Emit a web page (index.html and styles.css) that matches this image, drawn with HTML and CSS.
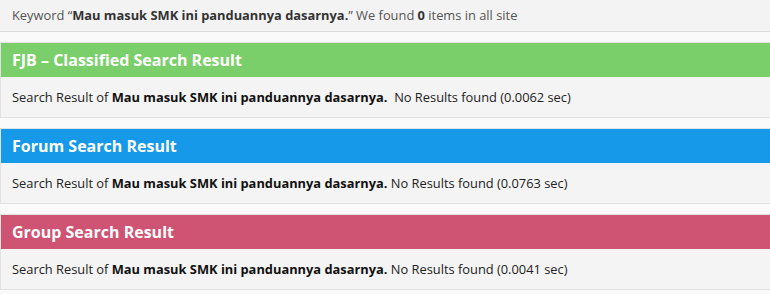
FILE: index.html
```html
<!DOCTYPE html>
<html>
<head>
<meta charset="utf-8">
<link rel="stylesheet" href="styles.css">
</head>
<body>
<div class="topbar">Keyword “<b>Mau masuk SMK ini panduannya dasarnya.</b>” We found <b>0</b> items in all site</div>
<div class="list">
  <section class="panel">
    <h2 class="panel-head green">FJB – Classified Search Result</h2>
    <div class="panel-body">Search Result of <b>Mau masuk SMK ini panduannya dasarnya.</b> &nbsp;No Results found (0.0062 sec)</div>
  </section>
  <section class="panel">
    <h2 class="panel-head blue">Forum Search Result</h2>
    <div class="panel-body">Search Result of <b>Mau masuk SMK ini panduannya dasarnya.</b> No Results found (0.0763 sec)</div>
  </section>
  <section class="panel">
    <h2 class="panel-head pink">Group Search Result</h2>
    <div class="panel-body">Search Result of <b>Mau masuk SMK ini panduannya dasarnya.</b> No Results found (0.0041 sec)</div>
  </section>
</div>
</body>
</html>
```
FILE: styles.css
```css
html, body {
  margin: 0;
  padding: 0;
  background: #fafafa;
  font-family: "Open Sans", "Noto Sans", sans-serif;
  overflow: hidden;
}
.topbar {
  height: 32px;
  box-sizing: border-box;
  padding: 5px 12px 0;
  background: #f3f3f3;
  border-bottom: 1px solid #dcdcdc;
  font-size: 12.87px;
  line-height: 20px;
  color: #555;
}
.topbar b { color: #333; }
.list {
  display: flex;
  flex-direction: column;
  gap: 10px;
  padding-top: 10px;
}
.panel {
  border: 1px solid #e2e2e2;
  border-right: none;
  background: #f4f4f4;
}
.panel-head {
  margin: 0;
  height: 34px;
  padding: 0 11px;
  font-size: 16px;
  font-weight: 700;
  line-height: 34px;
  color: #fff;
}
.green { background: #7bcf6a; }
.blue { background: #1799e9; }
.pink { background: #cf5372; }
.panel-body {
  height: 40px;
  padding: 0 11px;
  font-size: 12.85px;
  line-height: 40px;
  color: #222;
}
.panel-body b { color: #111; }
```
